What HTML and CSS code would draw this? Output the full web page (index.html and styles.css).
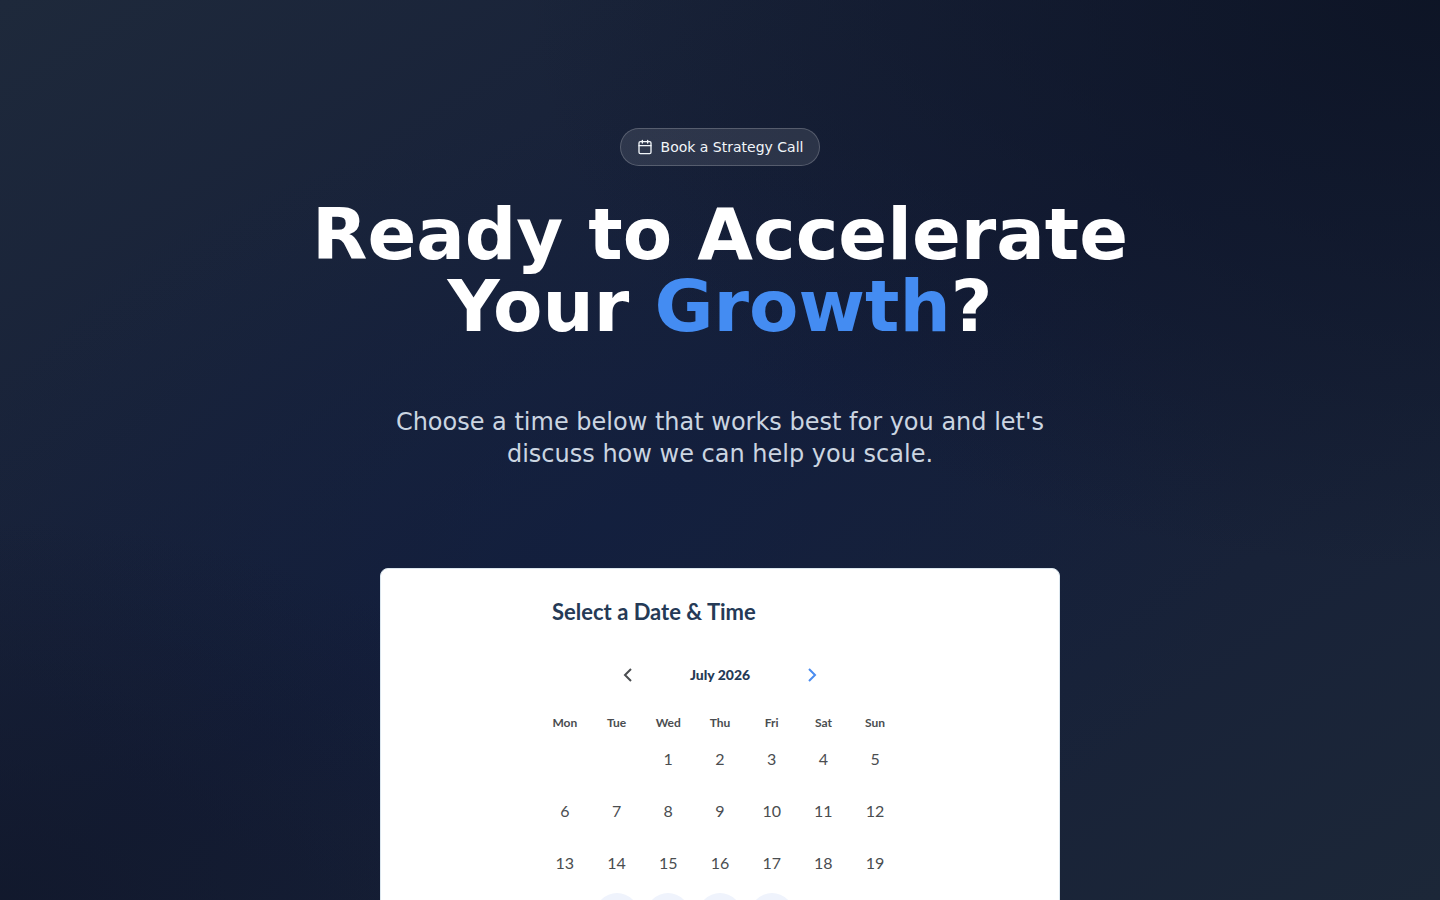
FILE: index.html
```html
<!DOCTYPE html>
<html lang="en">
<head>
<meta charset="utf-8">
<meta name="viewport" content="width=device-width, initial-scale=1">
<title>Book a Strategy Call</title>
<link rel="stylesheet" href="styles.css">
</head>
<body>
<main class="hero">
  <div class="badge">
    <svg class="badge-icon" viewBox="0 0 24 24" fill="none" stroke="currentColor" stroke-width="2" stroke-linecap="round" stroke-linejoin="round" aria-hidden="true"><path d="M8 2v4M16 2v4M3 10h18"/><rect x="3" y="4" width="18" height="18" rx="2"/></svg>
    <span>Book a Strategy Call</span>
  </div>
  <h1 class="title">Ready to Accelerate Your <span class="accent">Growth</span>?</h1>
  <p class="lead">Choose a time below that works best for you and let's discuss how we can help you scale.</p>
  <section class="card" aria-labelledby="picker-title">
    <div class="picker">
      <h2 class="picker-title" id="picker-title">Select a Date &amp; Time</h2>
      <div class="month">
        <button class="arrow" type="button" aria-label="Previous month" disabled><svg viewBox="0 0 10 16" aria-hidden="true"><path d="M8 2 2 8l6 6"/></svg></button>
        <div class="month-name">July 2026</div>
        <button class="arrow arrow-next" type="button" aria-label="Next month"><svg viewBox="0 0 10 16" aria-hidden="true"><path d="m2 2 6 6-6 6"/></svg></button>
      </div>
      <table class="days" aria-label="July 2026">
        <thead><tr><th>Mon</th><th>Tue</th><th>Wed</th><th>Thu</th><th>Fri</th><th>Sat</th><th>Sun</th></tr></thead>
        <tbody>
          <tr><td></td><td></td><td>1</td><td>2</td><td>3</td><td>4</td><td>5</td></tr>
          <tr><td>6</td><td>7</td><td>8</td><td>9</td><td>10</td><td>11</td><td>12</td></tr>
          <tr><td>13</td><td>14</td><td>15</td><td>16</td><td>17</td><td>18</td><td>19</td></tr>
          <tr><td>20</td><td><button class="day" type="button">21</button></td><td><button class="day" type="button">22</button></td><td><button class="day" type="button">23</button></td><td><button class="day" type="button">24</button></td><td>25</td><td>26</td></tr>
        </tbody>
      </table>
    </div>
  </section>
</main>
</body>
</html>
```

FILE: styles.css
```css
* { box-sizing: border-box; }

body {
  margin: 0;
  background: #0f172a;
  font-family: "DejaVu Sans", sans-serif;
}

.hero {
  display: flex;
  flex-direction: column;
  align-items: center;
  height: 100vh;
  padding: 128px 16px 0;
  overflow-y: auto;
  scrollbar-width: none;
  background:
    radial-gradient(ellipse at 100% 0%, rgba(13, 20, 36, 0.9), transparent 45%),
    radial-gradient(ellipse at 0% 100%, rgba(17, 24, 42, 0.8), transparent 30%),
    radial-gradient(ellipse at 42% 58%, rgba(18, 34, 68, 0.5), transparent 55%),
    linear-gradient(to bottom right, #1e293b, #141d38 50%, #1c2738);
}

.badge {
  display: flex;
  flex: none;
  align-items: center;
  gap: 8px;
  padding: 8px 16px;
  border: 1px solid rgba(255, 255, 255, 0.2);
  border-radius: 999px;
  background: rgba(255, 255, 255, 0.1);
  color: #f1f5f9;
  font-size: 14px;
  line-height: 20px;
}

.badge-icon { width: 16px; height: 16px; }

.title {
  max-width: 896px;
  margin: 32px 0 64px;
  color: #fff;
  font-size: 72px;
  line-height: 72px;
  font-weight: 700;
  text-align: center;
}

.accent { color: #448cf2; }

.lead {
  max-width: 672px;
  margin: 0 0 98px;
  color: #cbd5e1;
  font-size: 24px;
  line-height: 32px;
  text-align: center;
}

.card {
  flex: none;
  width: 100%;
  max-width: 680px;
  padding: 28px 16px;
  border: 1px solid #dbe6ee;
  border-radius: 8px;
  background: #fff;
  color: #4a4d50;
  font-family: Lato, sans-serif;
}

.picker {
  max-width: 362px;
  margin: 0 auto;
}

.picker-title {
  margin: 0 0 38px;
  padding-left: 13px;
  color: #253a56;
  font-size: 22px;
  line-height: 30px;
  font-weight: 700;
}

.month {
  display: flex;
  align-items: center;
  justify-content: center;
  gap: 18px;
}

.month-name {
  width: 104px;
  color: #253a56;
  font-size: 14px;
  line-height: 20px;
  font-weight: 900;
  text-align: center;
}

.arrow {
  display: flex;
  align-items: center;
  justify-content: center;
  width: 44px;
  height: 20px;
  padding: 0;
  border: 0;
  background: none;
  color: #4a4d50;
}

.arrow-next { color: #4a8cf0; }

.arrow svg {
  width: 10px;
  height: 16px;
  fill: none;
  stroke: currentColor;
  stroke-width: 2;
}

.days {
  width: 100%;
  margin-top: 28px;
  border-collapse: collapse;
  table-layout: fixed;
  text-align: center;
}

.days th {
  height: 20px;
  padding: 0;
  font-size: 12px;
  line-height: 20px;
  font-weight: 700;
}

.days td {
  height: 52px;
  padding: 0;
  font-size: 16px;
  line-height: 20px;
}

.day {
  width: 44px;
  height: 44px;
  padding: 0;
  border: 0;
  border-radius: 50%;
  background: #eff3fc;
  color: #2f6fe4;
  font: inherit;
  font-weight: 700;
}
```
